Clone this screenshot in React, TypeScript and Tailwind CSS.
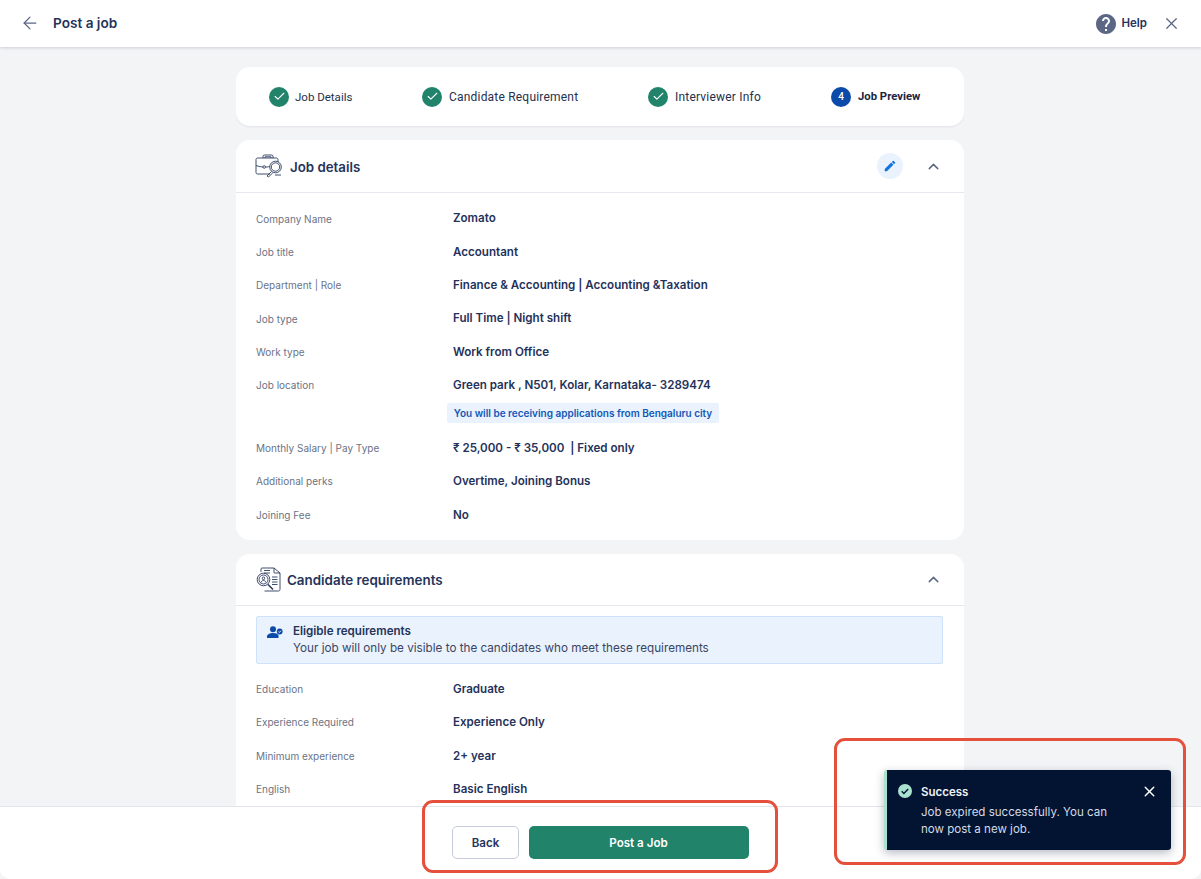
import { ArrowLeft, Check, ChevronUp, X } from "lucide-react"
import { MdEdit, MdHelp } from "react-icons/md"

function Row({ label, value }: { label: string; value: string }) {
  return (
    <div className="flex h-[33.33px] items-center">
      <div className="w-[197px] shrink-0 text-[10px] text-[#6b7385]">{label}</div>
      <div className="whitespace-pre text-[11.6px] font-semibold text-[#24325a]">{value}</div>
    </div>
  )
}

function StepDone({ label, className, textClass }: { label: string; className: string; textClass: string }) {
  return (
    <div className={`flex items-center gap-[6px] ${className}`}>
      <span className="flex h-5 w-5 items-center justify-center rounded-full bg-[#20836a]">
        <Check size={13} strokeWidth={2} className="text-white" />
      </span>
      <span className={`font-['Roboto',sans-serif] text-[#25304d] ${textClass}`}>{label}</span>
    </div>
  )
}

function BriefcaseIcon() {
  return (
    <svg width="28" height="24" viewBox="0 0 28 24" fill="none" stroke="#2b3a5e" strokeWidth="0.9">
      <path d="M8 4V2.200C8 1.500 8.500 1 9.200 1h7.600c.7 0 1.200.5 1.200 1.200V4" />
      <path d="M10 4V2.800h6V4" />
      <path d="M15 20H2.500C1.700 20 1 19.300 1 18.500V5.500C1 4.700 1.700 4 2.500 4h19C22.300 4 23 4.700 23 5.500V8" />
      <path d="M1 11.500c3 1 5 1.300 7 1.500M10.500 13c2 0 3-.2 4-.5" />
      <circle cx="9.200" cy="13" r="1.300" />
      <circle cx="20.500" cy="13" r="5.800" />
      <circle cx="20.500" cy="13" r="4.200" />
      <path d="M16.500 17.500l-4.500 4.500 1.500 1 4.400-4.400" />
      <path d="M20 21h6" />
    </svg>
  )
}

function DocSearchIcon() {
  return (
    <svg width="25" height="25" viewBox="0 0 25 25" fill="none" stroke="#2b3a5e" strokeWidth="0.9">
      <path d="M5 5V2c0-.6.4-1 1-1h12l6 5v16.500c0 .8-.6 1.500-1.500 1.500H8.500" />
      <path d="M18 1v4.500c0 .3.200.500.500.500H24" />
      <path d="M8 3.500h6M8 6h6" />
      <path d="M16 10h5.500M16 12.500h5.500M16 15h5.500M16 17.500h5.500" />
      <circle cx="7.500" cy="12.500" r="6.300" />
      <circle cx="7.500" cy="12.500" r="4.500" />
      <circle cx="7.500" cy="11.300" r="1.300" />
      <path d="M5 15.500c.5-1.500 1.500-2 2.500-2s2 .5 2.500 2" />
      <path d="M12 17.500l5 5" strokeWidth="1.600" />
    </svg>
  )
}

function EligibleIcon() {
  return (
    <svg width="16" height="13" viewBox="0 0 16 13">
      <circle cx="6" cy="3.200" r="3" fill="#0b4aa8" />
      <path d="M0 12v-1.500C0 8.500 3 7 6 7s4.500.7 5.500 2v3z" fill="#0b4aa8" />
      <circle cx="12.700" cy="5.500" r="2.900" fill="#0b4aa8" />
      <path d="M11.300 5.500l1 1 1.700-1.800" stroke="#fff" strokeWidth="0.900" fill="none" />
    </svg>
  )
}

export default function App() {
  return (
    <div className="relative flex h-[879px] w-[1201px] flex-col overflow-hidden bg-[#f3f4f6] font-['Inter',sans-serif]">
      {/* Top bar */}
      <header className="z-10 flex h-[47px] shrink-0 items-center justify-between bg-white pl-[20px] pr-[20px] shadow-[0_1px_3px_rgba(30,40,70,0.18)]">
        <div className="flex items-center gap-[13px]">
          <ArrowLeft size={20} strokeWidth={1.500} className="text-[#5c6785]" />
          <span className="text-[13.600px] font-semibold text-[#25345a]">Post a job</span>
        </div>
        <div className="flex items-center">
          <MdHelp size={24} className="text-[#5c6785]" />
          <span className="ml-[3px] text-[11.500px] font-semibold text-[#25345a]">Help</span>
          <X size={19} strokeWidth={1.500} className="ml-[15px] text-[#5c6785]" />
        </div>
      </header>

      {/* Scrolling body */}
      <main className="ml-[236px] flex w-[728px] flex-1 flex-col gap-[14px] overflow-hidden pt-[20px]">
        <div className="flex h-[59px] shrink-0 items-center rounded-[14px] bg-white pl-[33px] shadow-[0_1px_2px_rgba(30,40,70,0.08)]">
          <StepDone label="Job Details" className="w-[153px]" textClass="mt-[2px] text-[11.500px]" />
          <StepDone label="Candidate Requirement" className="w-[226px]" textClass="ml-[1px] text-[12px] tracking-[0.2px]" />
          <StepDone label="Interviewer Info" className="w-[183px]" textClass="ml-[1px] text-[12px] tracking-[0.2px]" />
          <div className="flex items-center gap-[7px]">
            <span className="flex h-5 w-5 items-center justify-center rounded-full bg-[#0b4aa8] font-['Roboto',sans-serif] text-[10px] font-medium text-white">4</span>
            <span className="mt-[2px] font-['Roboto',sans-serif] text-[11.300px] font-bold text-[#1a2540]">Job Preview</span>
          </div>
        </div>

        <section className="shrink-0 rounded-[14px] bg-white">
          <div className="flex h-[53px] items-center border-b border-[#e6e8f0] pl-[19px] pr-[22px]">
            <BriefcaseIcon />
            <span className="ml-[7px] mt-[3px] text-[13.300px] font-semibold text-[#25345a]">Job details</span>
            <span className="ml-auto flex h-[26px] w-[26px] items-center justify-center rounded-full bg-[#e9f2fd]">
              <MdEdit size={14} className="text-[#1273de]" />
            </span>
            <ChevronUp size={17} strokeWidth={2} className="ml-[22px] text-[#5c6785]" />
          </div>
          <div className="px-5 pb-[8px] pt-[9.500px]">
            <Row label="Company Name" value="Zomato" />
            <Row label="Job title" value="Accountant" />
            <Row label="Department | Role" value="Finance & Accounting | Accounting &Taxation" />
            <Row label="Job type" value="Full Time | Night shift" />
            <Row label="Work type" value="Work from Office" />
            <Row label="Job location" value="Green park , N501, Kolar, Karnataka- 3289474" />
            <div className="mb-[8.500px] ml-[191px] mt-[1px] flex h-5 w-[272px] items-center justify-center rounded-[2px] bg-[#e9f2fd] text-[10px] font-semibold text-[#1257b5]">
              You will be receiving applications from Bengaluru city
            </div>
            <Row label="Monthly Salary | Pay Type" value="₹ 25,000 - ₹ 35,000  | Fixed only" />
            <Row label="Additional perks" value="Overtime, Joining Bonus" />
            <Row label="Joining Fee" value="No" />
          </div>
        </section>

        <section className="shrink-0 rounded-[14px] bg-white">
          <div className="flex h-[52px] items-center border-b border-[#e6e8f0] pl-[20px] pr-[22px]">
            <DocSearchIcon />
            <span className="ml-[6px] mt-[1px] text-[13.400px] font-semibold text-[#25345a]">Candidate requirements</span>
            <ChevronUp size={17} strokeWidth={2} className="ml-auto text-[#5c6785]" />
          </div>
          <div className="px-5 pt-[10px]">
            <div className="mb-[9px] flex h-[48px] w-[687px] items-start rounded-[2px] border border-[#cfe2fb] bg-[#e9f2fd] pl-[10px] pt-[7px]">
              <span className="mt-[2px]"><EligibleIcon /></span>
              <div className="ml-[10px]">
                <div className="text-[11.600px] font-semibold leading-[15px] text-[#25345a]">Eligible requirements</div>
                <div className="mt-[2px] text-[11.700px] leading-[15px] text-[#3b4663]">Your job will only be visible to the candidates who meet these requirements</div>
              </div>
            </div>
            <Row label="Education" value="Graduate" />
            <Row label="Experience Required" value="Experience Only" />
            <Row label="Minimum experience" value="2+ year" />
            <Row label="English" value="Basic English" />
            <Row label="Skills" value="Tally" />
          </div>
        </section>
      </main>

      {/* Bottom action bar */}
      <footer className="absolute bottom-0 left-0 right-0 flex h-[73px] items-start justify-center gap-[10px] rounded-b-[10px] border-t border-[#e3e5ec] bg-white pr-[1px] pt-[19px]">
        <button className="h-[33px] w-[67px] rounded-[5px] border border-[#c5cbdb] bg-white pl-[1px] pt-[2px] text-[11.600px] font-semibold text-[#25345a]">Back</button>
        <button className="h-[33px] w-[220px] rounded-[5px] bg-[#20836a] pt-[2px] text-[11.600px] font-semibold text-white">Post a Job</button>
      </footer>

      {/* Toast */}
      <div className="absolute left-[884px] top-[770px] flex h-[80px] w-[287px] rounded-[3px] border-l-[3px] border-[#a9e2cf] bg-[#021432] pl-[10px] pr-[13px] pt-[13px] shadow-[0_3px_10px_rgba(20,30,60,0.3)]">
        <svg width="16" height="16" viewBox="0 0 16 16" className="shrink-0">
          <circle cx="8" cy="8" r="7" fill="#a9e2cf" />
          <path d="M4.700 8.200l2.200 2.200 4.300-4.500" stroke="#021432" strokeWidth="1.400" fill="none" />
        </svg>
        <div className="ml-[8px] flex-1">
          <div className="mt-[1px] text-[11.500px] font-semibold leading-[16px] text-[#eef2f6]">Success</div>
          <div className="mt-[3.500px] w-[200px] text-[11.560px] leading-[17px] text-[#d5dae3]">Job expired successfully. You can now post a new job.</div>
        </div>
        <X size={17} strokeWidth={2} className="shrink-0 text-white" />
      </div>

      {/* Red review annotations */}
      <div className="pointer-events-none absolute left-[422px] top-[800px] h-[73px] w-[356px] rounded-[11px] border-[3px] border-[#e5503c]" />
      <div className="pointer-events-none absolute left-[834px] top-[738px] h-[127px] w-[352px] rounded-[11px] border-[3px] border-[#e5503c]" />
    </div>
  )
}
